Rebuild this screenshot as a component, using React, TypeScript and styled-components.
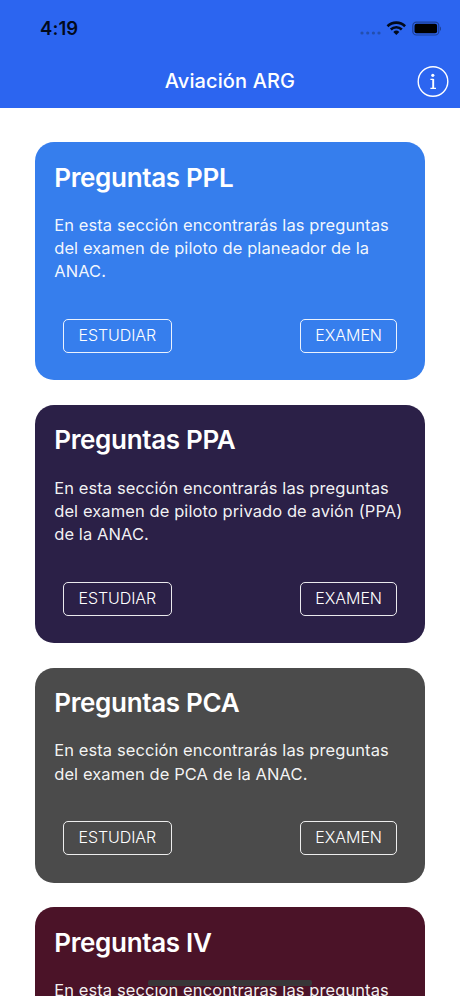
import React from "react";
import styled, { createGlobalStyle } from "styled-components";

const GlobalStyle = createGlobalStyle`
  * { box-sizing: border-box; }
  html, body { margin: 0; padding: 0; background: #fff; overflow: hidden; }
  body { font-family: Inter, "Liberation Sans", sans-serif; }
`;

const Screen = styled.div`
  position: relative;
  width: 460px;
  height: 996px;
  overflow: hidden;
  background: #fff;
`;

const TopArea = styled.header`
  height: 108px;
  background: #2c65f0;
`;

const StatusBar = styled.div`
  height: 54px;
  padding: 3px 19px 0 40px;
  display: flex;
  align-items: center;
  justify-content: space-between;
`;

const Clock = styled.time`
  margin-bottom: 2px;
  font-size: 18.5px;
  font-weight: 600;
  letter-spacing: 0.1px;
  color: #020a1c;
`;

const NavBar = styled.div`
  height: 54px;
  padding: 0 11px 0 43px;
  display: grid;
  grid-template-columns: 1fr 32px;
  align-items: center;
`;

const NavTitle = styled.h1`
  margin: 0;
  text-align: center;
  font-size: 20px;
  font-weight: 500;
  letter-spacing: 0.12px;
  color: #fff;
`;

const InfoButton = styled.button`
  width: 32px;
  height: 32px;
  padding: 0;
  border: 0;
  background: none;
  display: block;
`;

const CardList = styled.main`
  padding: 34.4px 34.6px 0 34.6px;
  display: flex;
  flex-direction: column;
  gap: 24.8px;
`;

const Card = styled.article<{ $color: string }>`
  padding: 19.3px 20px 27.5px 19.6px;
  border-radius: 19px;
  background: ${(p) => p.$color};
  color: #fff;
`;

const CardTitle = styled.h2`
  margin: 0;
  font-size: 26px;
  line-height: 32px;
  font-weight: 600;
  letter-spacing: -0.32px;
  white-space: nowrap;
`;

const CardText = styled.p`
  margin: 20.1px 0 35.2px;
  font-size: 16.5px;
  line-height: 23.3px;
  font-weight: 400;
  letter-spacing: 0.09px;
  white-space: pre;
  color: rgba(255, 255, 255, 0.95);
`;

const Actions = styled.div`
  padding: 0 8px 0 8.4px;
  display: flex;
  justify-content: space-between;
`;

const OutlineButton = styled.button<{ $width: number }>`
  width: ${(p) => p.$width}px;
  height: 34px;
  padding: 0 0 1.5px;
  border: 1.4px solid rgba(255, 255, 255, 0.9);
  border-radius: 5px;
  background: none;
  color: #fff;
  font: 350 16px Inter, "Liberation Sans", sans-serif;
  letter-spacing: -0.06px;
`;

const HomeIndicator = styled.div`
  position: absolute;
  left: 148px;
  top: 980px;
  width: 164px;
  height: 6px;
  border-radius: 2px;
  background: #383638;
`;

const StatusIcons = () => (
  <svg width="82" height="18" viewBox="0 0 82 18" aria-hidden="true">
    <g fill="#234fae">
      <circle cx="3" cy="13" r="1.6" />
      <circle cx="8.7" cy="13" r="1.6" />
      <circle cx="14.4" cy="13" r="1.6" />
      <circle cx="20" cy="13" r="1.6" />
    </g>
    <g fill="none" stroke="#020a1c" strokeWidth="2.6">
      <path d="M28.5 6.2a12.6 12.6 0 0 1 17.6 0" />
      <path d="M31.8 9.5a8 8 0 0 1 11 0" />
    </g>
    <path d="M34.3 12a4.4 4.4 0 0 1 6 0l-3 3z" fill="#020a1c" />
    <rect x="53.8" y="2.1" width="26" height="12.9" rx="3.6" fill="none" stroke="#1d4096" strokeWidth="1.2" />
    <rect x="55.5" y="3.8" width="22.6" height="9.5" rx="2" fill="#000" />
    <path d="M81 6.5c1.5.8 1.5 3.6 0 4.4z" fill="#1d4096" />
  </svg>
);

const InfoIcon = () => (
  <svg width="32" height="32" viewBox="0 0 32 32" fill="none" aria-hidden="true">
    <circle cx="16" cy="16.5" r="14.8" stroke="#fff" strokeWidth="1.4" />
    <circle cx="15.8" cy="10.3" r="1.6" fill="#fff" />
    <path d="M13.4 14.4h2.8M13.4 23.4h5.6" stroke="#fff" strokeWidth="1.2" />
    <path d="M16.2 13.9v9.8" stroke="#fff" strokeWidth="1.9" />
  </svg>
);

const sections = [
  {
    title: "Preguntas PPL",
    color: "#367eed",
    text: "En esta sección encontrarás las preguntas\ndel examen de piloto de planeador de la\nANAC.",
  },
  {
    title: "Preguntas PPA",
    color: "#2b2047",
    text: "En esta sección encontrarás las preguntas\ndel examen de piloto privado de avión (PPA)\nde la ANAC.",
  },
  {
    title: "Preguntas PCA",
    color: "#4b4b4b",
    text: "En esta sección encontrarás las preguntas\ndel examen de PCA de la ANAC.",
  },
  {
    title: "Preguntas IV",
    color: "#4b1328",
    text: "En esta sección encontrarás las preguntas",
  },
];

export default function App() {
  return (
    <>
      <GlobalStyle />
      <Screen>
        <TopArea>
          <StatusBar>
            <Clock>4:19</Clock>
            <StatusIcons />
          </StatusBar>
          <NavBar>
            <NavTitle>Aviación ARG</NavTitle>
            <InfoButton aria-label="Información">
              <InfoIcon />
            </InfoButton>
          </NavBar>
        </TopArea>
        <CardList>
          {sections.map((s) => (
            <Card key={s.title} $color={s.color}>
              <CardTitle>{s.title}</CardTitle>
              <CardText>{s.text}</CardText>
              <Actions>
                <OutlineButton $width={109.5}>ESTUDIAR</OutlineButton>
                <OutlineButton $width={97.5}>EXAMEN</OutlineButton>
              </Actions>
            </Card>
          ))}
        </CardList>
        <HomeIndicator />
      </Screen>
    </>
  );
}
